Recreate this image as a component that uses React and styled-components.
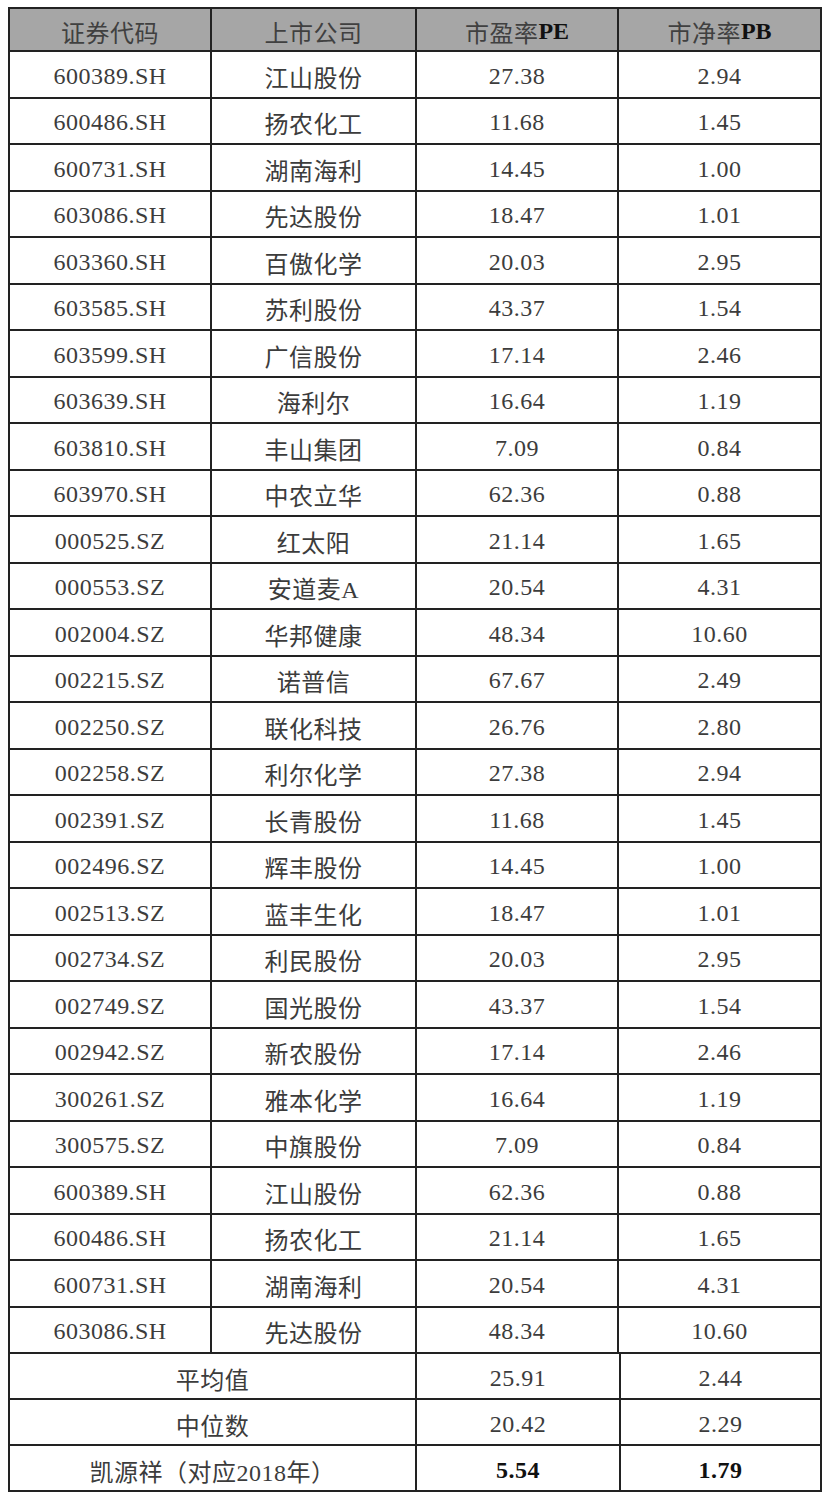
import React from "react";
import styled, { createGlobalStyle } from "styled-components";

const GlobalStyle = createGlobalStyle`
  html, body { margin: 0; padding: 0; background: #ffffff; }
  body { font-family: "Liberation Serif", "Noto Sans CJK SC", serif; }
`;

const Page = styled.div`
  width: 829px;
  min-height: 1507px;
  padding: 7px 0 0 8px;
  box-sizing: border-box;
  background: #fff;
`;

const Table = styled.div`
  width: 814px;
  box-sizing: border-box;
  border-left: 2px solid #222;
  border-top: 2px solid #222;
  display: flex;
  flex-direction: column;
`;

const Row = styled.div`
  display: grid;
  grid-template-columns: ${(p) =>
    p.$summary ? "407px 204px 201px" : "202px 205px 202px 203px"};
  height: ${(p) => p.$h}px;
  background: ${(p) => (p.$head ? "#a6a6a6" : "#fff")};
`;

const Cell = styled.div`
  box-sizing: border-box;
  border-right: 2px solid #222;
  border-bottom: 2px solid #222;
  display: flex;
  align-items: center;
  justify-content: center;
  padding-top: 4px;
  font-family: "Liberation Serif", "Noto Sans CJK SC", serif;
  font-size: 24px;
  font-weight: ${(p) => (p.$bold ? 700 : 400)};
  color: ${(p) => (p.$bold ? "#111" : p.$head ? "#404040" : "#3c3c3c")};
  letter-spacing: 0.5px;
  white-space: nowrap;
`;

const Latin = styled.span`
  font-weight: 700;
  color: #111;
  letter-spacing: 0;
`;

const rows = [
  ["600389.SH", "江山股份", "27.38", "2.94"],
  ["600486.SH", "扬农化工", "11.68", "1.45"],
  ["600731.SH", "湖南海利", "14.45", "1.00"],
  ["603086.SH", "先达股份", "18.47", "1.01"],
  ["603360.SH", "百傲化学", "20.03", "2.95"],
  ["603585.SH", "苏利股份", "43.37", "1.54"],
  ["603599.SH", "广信股份", "17.14", "2.46"],
  ["603639.SH", "海利尔", "16.64", "1.19"],
  ["603810.SH", "丰山集团", "7.09", "0.84"],
  ["603970.SH", "中农立华", "62.36", "0.88"],
  ["000525.SZ", "红太阳", "21.14", "1.65"],
  ["000553.SZ", "安道麦A", "20.54", "4.31"],
  ["002004.SZ", "华邦健康", "48.34", "10.60"],
  ["002215.SZ", "诺普信", "67.67", "2.49"],
  ["002250.SZ", "联化科技", "26.76", "2.80"],
  ["002258.SZ", "利尔化学", "27.38", "2.94"],
  ["002391.SZ", "长青股份", "11.68", "1.45"],
  ["002496.SZ", "辉丰股份", "14.45", "1.00"],
  ["002513.SZ", "蓝丰生化", "18.47", "1.01"],
  ["002734.SZ", "利民股份", "20.03", "2.95"],
  ["002749.SZ", "国光股份", "43.37", "1.54"],
  ["002942.SZ", "新农股份", "17.14", "2.46"],
  ["300261.SZ", "雅本化学", "16.64", "1.19"],
  ["300575.SZ", "中旗股份", "7.09", "0.84"],
  ["600389.SH", "江山股份", "62.36", "0.88"],
  ["600486.SH", "扬农化工", "21.14", "1.65"],
  ["600731.SH", "湖南海利", "20.54", "4.31"],
  ["603086.SH", "先达股份", "48.34", "10.60"],
];

const summary = [
  { label: "平均值", pe: "25.91", pb: "2.44" },
  { label: "中位数", pe: "20.42", pb: "2.29" },
  { label: "凯源祥（对应2018年）", pe: "5.54", pb: "1.79", bold: true },
];

export default function App() {
  return (
    <Page>
      <GlobalStyle />
      <Table>
        <Row $head $h={43}>
          <Cell $head>证券代码</Cell>
          <Cell $head>上市公司</Cell>
          <Cell $head>
            市盈率<Latin>PE</Latin>
          </Cell>
          <Cell $head>
            市净率<Latin>PB</Latin>
          </Cell>
        </Row>
        {rows.map((r, i) => (
          <Row key={i} $h={46.5}>
            {r.map((c, j) => (
              <Cell key={j}>{c}</Cell>
            ))}
          </Row>
        ))}
        {summary.map((s, i) => (
          <Row key={"s" + i} $summary $h={46}>
            <Cell>{s.label}</Cell>
            <Cell $bold={s.bold}>{s.pe}</Cell>
            <Cell $bold={s.bold}>{s.pb}</Cell>
          </Row>
        ))}
      </Table>
    </Page>
  );
}
